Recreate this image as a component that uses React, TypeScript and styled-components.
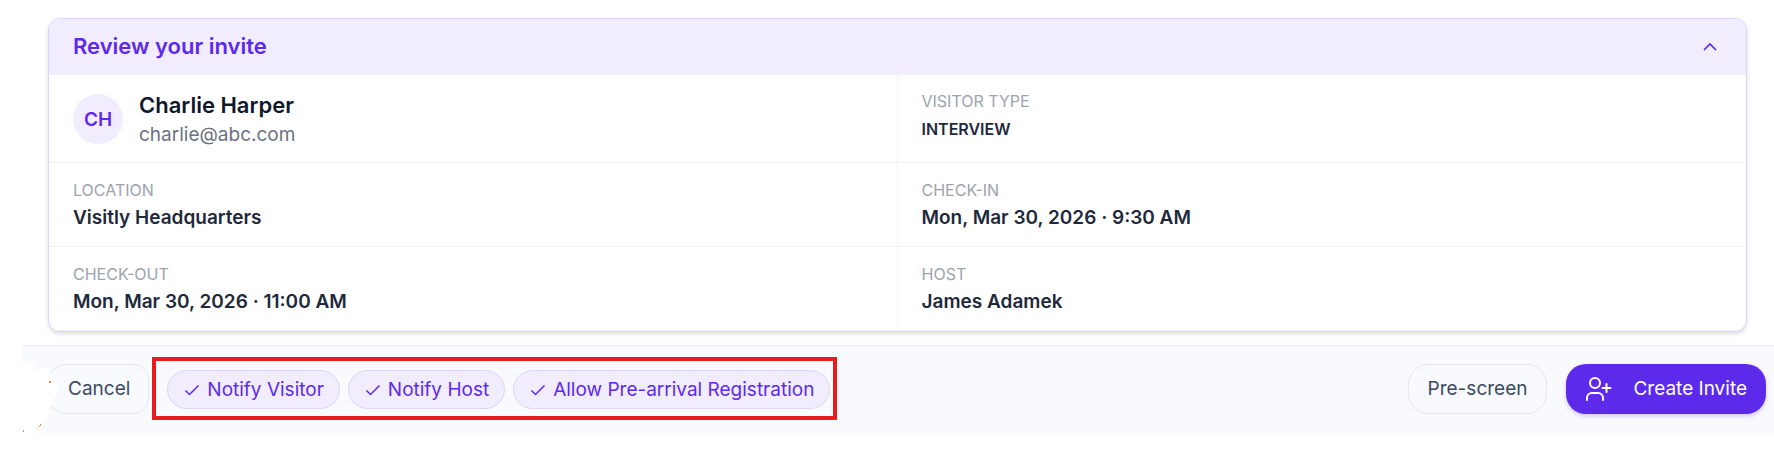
import React, { useState } from "react";
import styled, { createGlobalStyle } from "styled-components";

const GlobalStyle = createGlobalStyle`
  *, *::before, *::after { box-sizing: border-box; }
  body {
    margin: 0;
    background: #ffffff;
    font-family: Inter, "Liberation Sans", sans-serif;
    color: #1e293b;
  }
  button { font: inherit; cursor: pointer; }
`;

const Page = styled.main`
  display: flex;
  flex-direction: column;
  gap: 13px;
  padding-top: 18px;
`;

const Card = styled.section`
  margin: 0 27px 0 48px;
  border: 1px solid #ddd3fd;
  border-radius: 12px;
  background: #ffffff;
  overflow: hidden;
  box-shadow: 0 2px 4px rgba(15, 23, 42, 0.14);
`;

const CardHeading = styled.h2`
  margin: 0;
  font-size: 22px;
  line-height: 28px;
  font-weight: 600;
`;

const CardToggle = styled.button`
  display: flex;
  align-items: center;
  justify-content: space-between;
  width: 100%;
  padding: 13px 25px 15px 24px;
  border: 0;
  background: #f1ecfe;
  color: #5d2aec;
  text-align: left;
`;

const Details = styled.dl`
  display: grid;
  grid-template-columns: 1fr 1fr;
  margin: 0;
`;

const Cell = styled.div<{ $top?: boolean }>`
  padding: ${(p) => (p.$top ? 14 : 15)}px 24px 13px;
  border-bottom: 1px solid #f1f2f5;

  &:nth-child(odd) { border-right: 1px solid #f1f2f5; }
`;

const Label = styled.dt`
  font-size: 16px;
  line-height: 25px;
  color: #9ca3af;
  text-transform: uppercase;
`;

const Value = styled.dd<{ $small?: boolean }>`
  margin: 0;
  font-size: ${(p) => (p.$small ? 16 : 19)}px;
  line-height: 30px;
  font-weight: 600;
`;

const Person = styled(Cell)`
  display: flex;
  align-items: center;
  gap: 16px;
`;

const Avatar = styled.dt`
  display: grid;
  place-items: center;
  width: 50px;
  height: 50px;
  border-radius: 50%;
  background: #f1ecfe;
  color: #5d2aec;
  font-size: 19px;
  font-weight: 600;
`;

const PersonText = styled.dd`
  margin: 0;
  padding-top: 2px;
`;

const Name = styled.div`
  font-size: 22px;
  line-height: 29px;
  font-weight: 600;
  color: #0f172a;
`;

const Email = styled.div`
  font-size: 19px;
  line-height: 29px;
  color: #6b7280;
`;

const Footer = styled.footer`
  position: relative;
  display: flex;
  align-items: center;
  justify-content: space-between;
  margin-left: 23px;
  padding: 11px 8px 13px 26px;
  border-top: 1px solid #f1f2f5;
  background: #f9fafd;
`;

const Group = styled.div<{ $gap: number }>`
  display: flex;
  align-items: center;
  gap: ${(p) => p.$gap}px;
`;

const Button = styled.button`
  height: 50px;
  padding: 0 19px;
  border: 1px solid #e2e8f0;
  border-radius: 20px;
  background: transparent;
  color: #3b4960;
  font-size: 19px;
  line-height: 28px;
`;

const CancelButton = styled(Button)`
  padding: 0 18px;
  border-radius: 16px;
`;

const PrimaryButton = styled(Button)`
  display: flex;
  align-items: center;
  gap: 20px;
  border: 0;
  background: #5d2aec;
  color: #ffffff;
  box-shadow: 0 2px 4px rgba(93, 42, 236, 0.25);
`;

const Highlight = styled.div`
  display: flex;
  gap: 8px;
  padding: 9px 3px 7px 11px;
  border: 4px solid #e81c1c;
`;

const Chip = styled.label`
  display: flex;
  align-items: center;
  gap: 6px;
  height: 39px;
  padding: 0 15px;
  border: 1px solid #ddd3fd;
  border-radius: 20px;
  background: #f1ecfe;
  color: #5d2aec;
  font-size: 19px;
  line-height: 28px;
  cursor: pointer;
`;

const ChipInput = styled.input`
  appearance: none;
  width: 0;
  height: 0;
  margin: 0 -6px 0 0;

  &:not(:checked) + svg { visibility: hidden; }
`;

const Smudge = styled.svg`
  position: absolute;
  left: 0;
  bottom: 0;
  pointer-events: none;
`;

const notices = ["Notify Visitor", "Notify Host", "Allow Pre-arrival Registration"];

export default function App() {
  const [open, setOpen] = useState(true);
  return (
    <>
      <GlobalStyle />
      <Page>
        <Card>
          <CardToggle type="button" aria-expanded={open} onClick={() => setOpen(!open)}>
            <CardHeading as="span">Review your invite</CardHeading>
            <svg width="22" height="22" viewBox="0 0 22 22" fill="none" stroke="currentColor" strokeWidth="1.7" aria-hidden="true">
              <path d="M5 15l6-6 6 6" />
            </svg>
          </CardToggle>
          {open && (
            <Details>
              <Person $top>
                <Avatar>CH</Avatar>
                <PersonText>
                  <Name>Charlie Harper</Name>
                  <Email>charlie@abc.com</Email>
                </PersonText>
              </Person>
              <Cell $top>
                <Label>Visitor type</Label>
                <Value $small>INTERVIEW</Value>
              </Cell>
              <Cell>
                <Label>Location</Label>
                <Value>Visitly Headquarters</Value>
              </Cell>
              <Cell>
                <Label>Check-in</Label>
                <Value>Mon, Mar 30, 2026 · 9:30 AM</Value>
              </Cell>
              <Cell>
                <Label>Check-out</Label>
                <Value>Mon, Mar 30, 2026 · 11:00 AM</Value>
              </Cell>
              <Cell>
                <Label>Host</Label>
                <Value>James Adamek</Value>
              </Cell>
            </Details>
          )}
        </Card>
        <Footer>
          <Group $gap={3}>
            <CancelButton type="button">Cancel</CancelButton>
            <Highlight>
              {notices.map((text) => (
                <Chip key={text}>
                  <ChipInput type="checkbox" defaultChecked />
                  <svg width="18" height="18" viewBox="0 0 18 18" fill="none" stroke="currentColor" strokeWidth="1.5" aria-hidden="true">
                    <path d="M2.500 9.500l4 4 9-9" />
                  </svg>
                  {text}
                </Chip>
              ))}
            </Highlight>
          </Group>
          <Group $gap={19}>
            <Button type="button">Pre-screen</Button>
            <PrimaryButton type="button">
              <svg width="28" height="28" viewBox="0 0 28 28" fill="none" stroke="currentColor" strokeWidth="2" strokeLinecap="round" aria-hidden="true">
                <circle cx="10" cy="8" r="5" />
                <path d="M2 25v-2a5 5 0 0 1 5-5h6a5 5 0 0 1 5 5v2M21.500 9v8M17.500 13h8" />
              </svg>
              Create Invite
            </PrimaryButton>
          </Group>
          <Smudge width="36" height="72" viewBox="0 0 36 72" aria-hidden="true">
            <path
              fill="#ffffff"
              d="M0 4Q5 2 9 1L12 5 13 10Q19 8 24 6L25 12 31 14 30 18 35 22Q36 27 34 31 33 37 30 41 29 47 25 52 23 59 19 64 16 69 12 72H0Z"
            />
            <path fill="#f08a3c" d="M26 20h2v2h-2zM17 63h1v2h-1zM16 65h1v1h-1zM0 69h1v2h-1z" />
            <path fill="#fbd3b4" d="M27 31h1v1h-1zM26 33h1v1h-1zM27 46h1v2h-1zM13 67h1v1h-1z" />
          </Smudge>
        </Footer>
      </Page>
    </>
  );
}
